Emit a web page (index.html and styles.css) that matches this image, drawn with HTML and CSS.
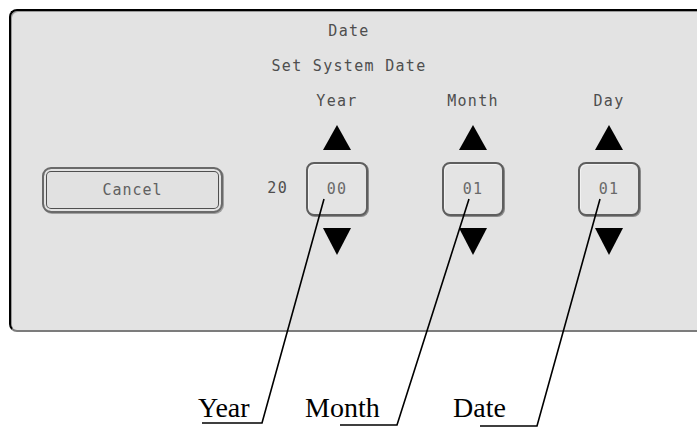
FILE: index.html
```html
<!DOCTYPE html>
<html lang="en">
<head>
  <meta charset="UTF-8" />
  <meta name="viewport" content="width=device-width, initial-scale=1.0" />
  <title>Date - Set System Date</title>
  <link rel="stylesheet" href="styles.css">
</head>
<body>
  <div class="panel">
    <div class="title">Date</div>
    <div class="subtitle">Set System Date</div>
    <div class="controls">
      <button class="cancel" type="button">Cancel</button>
      <div class="century">20</div>
      <div class="spin">
        <div class="spin-label">Year</div>
        <svg class="arrow" width="28" height="25" viewBox="0 0 28 25"><polygon points="14,0 28,25 0,25" /></svg>
        <div class="spin-box">00</div>
        <svg class="arrow down" width="28" height="27" viewBox="0 0 28 27"><polygon points="0,0 28,0 14,27" /></svg>
      </div>
      <div class="spin">
        <div class="spin-label">Month</div>
        <svg class="arrow" width="28" height="25" viewBox="0 0 28 25"><polygon points="14,0 28,25 0,25" /></svg>
        <div class="spin-box">01</div>
        <svg class="arrow down" width="28" height="27" viewBox="0 0 28 27"><polygon points="0,0 28,0 14,27" /></svg>
      </div>
      <div class="spin">
        <div class="spin-label">Day</div>
        <svg class="arrow" width="28" height="25" viewBox="0 0 28 25"><polygon points="14,0 28,25 0,25" /></svg>
        <div class="spin-box">01</div>
        <svg class="arrow down" width="28" height="27" viewBox="0 0 28 27"><polygon points="0,0 28,0 14,27" /></svg>
      </div>
    </div>
  </div>

  <div class="callouts">
    <span class="callout year">Year</span>
    <span class="callout month">Month</span>
    <span class="callout date">Date</span>
  </div>

  <!-- leader lines drawn over the screen shot -->
  <svg class="leaders" width="697" height="428" viewBox="0 0 697 428">
    <polyline points="324,199 262,423 202,423" />
    <polyline points="469,199 397,425 340,425" />
    <polyline points="600,199 537,426 480,426" />
  </svg>
</body>
</html>
```

FILE: styles.css
```css
html, body {
  margin: 0;
  overflow: hidden;
  background: #fff;
}
body {
  position: relative;
  width: 697px;
  height: 428px;
}
.panel {
  box-sizing: border-box;
  width: 688px;
  height: 323px;
  margin: 9px 0 0 9px;
  border-top: 2px solid #000;
  border-left: 2px solid #000;
  border-bottom: 2px solid #7c7c7c;
  border-radius: 8px 0 0 8px;
  background: #e3e3e3;
  box-shadow: inset 1px 1px 0 #9a9a9a;
  font-family: "DejaVu Sans Mono", "Liberation Mono", monospace;
  font-size: 15px;
  letter-spacing: 1.3px;
  color: #4e4e4e;
}
.title, .subtitle {
  width: 676px;
  text-align: center;
  line-height: 20px;
}
.title {
  padding-top: 10px;
}
.subtitle {
  margin-top: 15px;
}
.controls {
  display: flex;
  align-items: flex-start;
  margin-top: 15px;
  padding-left: 31px;
}
.cancel {
  box-sizing: border-box;
  width: 181px;
  height: 46px;
  margin-top: 76px;
  padding: 0;
  border: 2px solid #6a6a6a;
  border-radius: 9px;
  background: #e1e1e1;
  box-shadow: inset 0 0 0 2px #e3e3e3, inset 0 0 0 3px #4f4f4f, 1px 1px 0 #a0a0a0;
  font: inherit;
  color: #606060;
  letter-spacing: 1px;
}
.century {
  box-sizing: border-box;
  width: 83px;
  margin-top: 87px;
  padding-right: 18px;
  text-align: right;
  line-height: 20px;
}
.spin {
  display: flex;
  flex-direction: column;
  align-items: center;
  width: 62px;
}
.spin + .spin {
  margin-left: 74px;
}
.spin-label {
  line-height: 20px;
  white-space: nowrap;
}
.arrow {
  display: block;
  margin-top: 14px;
  fill: #000;
}
.arrow.down {
  margin-top: 12px;
}
.spin-box {
  box-sizing: border-box;
  width: 62px;
  height: 54px;
  margin-top: 12px;
  border: 2px solid #5e5e5e;
  border-radius: 8px;
  background: #e4e4e4;
  box-shadow: 1px 1px 0 #8a8a8a, inset 1px 1px 0 #f2f2f2;
  display: flex;
  align-items: center;
  justify-content: center;
  color: #6a6a6a;
}
.callouts {
  display: flex;
  margin-top: 60px;
  padding-left: 198px;
  font-family: "Liberation Serif", "Times New Roman", serif;
  font-size: 28px;
  line-height: 32px;
  color: #000;
}
.callout.year {
  width: 107px;
}
.callout.month {
  width: 148px;
}
.leaders {
  position: absolute;
  left: 0;
  top: 0;
  pointer-events: none;
}
.leaders polyline {
  fill: none;
  stroke: #000;
  stroke-width: 1.6;
}
```
